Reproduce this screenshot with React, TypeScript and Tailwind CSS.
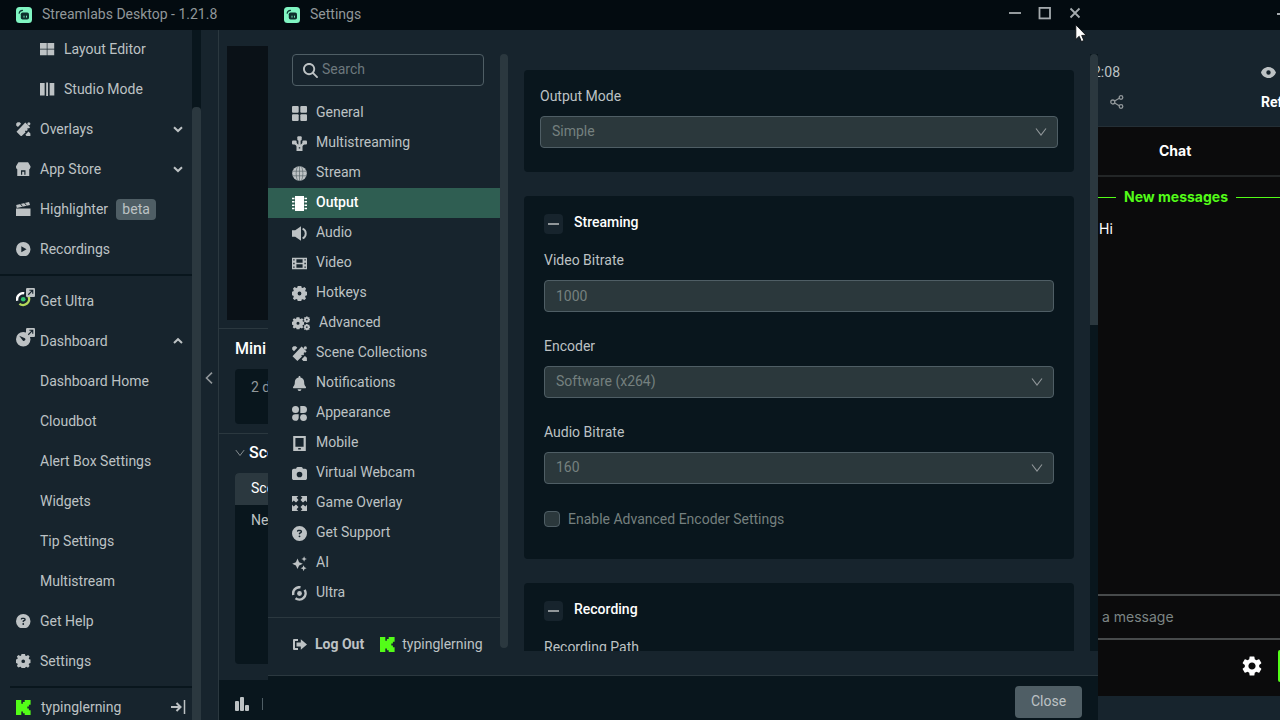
import type { ReactNode } from 'react';
import clsx from 'clsx';
import {
  FaBell,
  FaCamera,
  FaCircleQuestion,
  FaMagnifyingGlass,
} from 'react-icons/fa6';
import { MdSettings } from 'react-icons/md';

type IconName =
  | 'layout'
  | 'studio'
  | 'themes'
  | 'store'
  | 'clapper'
  | 'play'
  | 'ultraColor'
  | 'dashboard'
  | 'general'
  | 'multistream'
  | 'globe'
  | 'output'
  | 'volume'
  | 'gear'
  | 'gears'
  | 'appearance'
  | 'mobile'
  | 'expand'
  | 'sparkles'
  | 'ultra'
  | 'logout'
  | 'kick'
  | 'question'
  | 'film'
  | 'bell'
  | 'camera';

const gearPath =
  'M5.700 0h3.600l.4 1.700 1 .4L12.500 1.100l1.600 1.600-.9 1.700.4 1L15 5.700v3.600l-1.500.4-.4 1 .9 1.700-1.600 1.700-1.700-.9-1 .4L9.300 15H5.700l-.4-1.500-1-.4-1.700.9L.9 12.400l.9-1.700-.4-1L0 9.300V5.700l1.400-.4.4-1L.9 2.700l1.700-1.600 1.700.9 1-.4zM7.500 5.600a1.900 1.900 0 100 3.800 1.900 1.900 0 000-3.800z';

const drawings: Record<string, ReactNode> = {
  layout: <path d="M0 1h7v6H0zM7.700 1h7v6h-7zM0 7.700h7v6H0zM7.700 7.700h7v6h-7z" />,
  studio: <path d="M0 1h4.800v13H0zM6.400 .5h1.900v14H6.400zM10 1h4.800v13H10z" />,
  themes: (
    <>
      <path d="M9.600.6L14.600 5.400l-1.300 1.400-.9-.6-.9 1 .8.9-1.300 1.300-.9-.6-.9.900.8.900L5.400 14.900.5 10.200z" />
      <path d="M1.600.2h2.200l1.500 1.600L2 5.200.2 3.600V1.500zM14.900 14.900h-3.600l-1.600-1.700 3.200-3.300 2 1.900z" />
      <circle cx="13.300" cy="1.900" r="1.600" />
    </>
  ),
  store: (
    <path
      fillRule="evenodd"
      d="M2.500.3h10L15 4.500c.2 1.500-.5 2.700-1.300 3.100V14.700H1.300V7.600C.5 7.200-.2 6 0 4.500zM5.200 8.600v4.500h4.600V8.600zM6.400 10h2.200v3.100H6.400z"
    />
  ),
  clapper: (
    <>
      <path d="M.2 3.100L13.500.1l1 3L.8 6.300zM0 6.700h15v8H0z" />
      <path d="M4.600 2l2 2.500M8.800 1l2 2.500" stroke="#17242d" strokeWidth="1" />
    </>
  ),
  play: <path fillRule="evenodd" d="M7.500 0a7.500 7.500 0 100 15 7.500 7.500 0 000-15zM5.500 4.400l5.400 3.100-5.400 3.100z" />,
  dashboard: (
    <path fillRule="evenodd" d="M7.500 0a7.500 7.500 0 100 15 7.500 7.500 0 000-15zM3.300 3.900l5.900 2.600c1.400 1.100-.1 3.500-2 2.500z" />
  ),
  general: (
    <>
      <rect width="6.700" height="6.700" rx="1" />
      <rect x="8.300" width="6.700" height="6.700" rx="1" />
      <rect y="8.300" width="6.700" height="6.700" rx="1" />
      <rect x="8.300" y="8.300" width="6.700" height="6.700" rx="1" />
    </>
  ),
  multistream: (
    <>
      <path d="M7.500 3v7M2.500 6.500l3 3h4l3-3" fill="none" stroke="currentColor" strokeWidth="2.200" />
      <rect x="5.300" y=".2" width="4.400" height="4.200" rx="1" />
      <rect x="0" y="4.400" width="4.600" height="4" rx="1" />
      <rect x="10.400" y="4.400" width="4.600" height="4" rx="1" />
      <path fillRule="evenodd" d="M4.500 9h6v5.900h-6zM6.800 11.200v1.400h1.400v-1.400z" />
    </>
  ),
  globe: (
    <>
      <circle cx="7.500" cy="7.500" r="7.300" />
      <path
        d="M.4 5.200h14.200M.4 9.800h14.200M7.500 0v15M5.400.5C3.700 5 3.700 10 5.400 14.500M9.600.5c1.700 4.500 1.700 9.500 0 14"
        fill="none"
        stroke="#5c686d"
        strokeWidth=".7"
      />
    </>
  ),
  output: (
    <path d="M3 0h9v15H3zM0 1.800h2.500v1.500H0zM0 5.100h2.500v1.500H0zM0 8.400h2.500v1.500H0zM0 11.700h2.500v1.500H0zM12.500 1.800H15v1.500h-2.500zM12.500 5.100H15v1.500h-2.500zM12.500 8.400H15v1.500h-2.500zM12.500 11.700H15v1.500h-2.500z" />
  ),
  volume: (
    <>
      <path d="M0 4.300h3.200L9 .2v14.600l-5.800-4.100H0z" />
      <path d="M10.600 2.600c4.200 1.600 4.200 8.200 0 9.800" fill="none" stroke="currentColor" strokeWidth="1.900" />
    </>
  ),
  gear: <path fillRule="evenodd" d={gearPath} />,
  film: (
    <path
      fillRule="evenodd"
      d="M0 1.700h15v11.600H0zM1.200 3.200v1.400h1.400V3.200zM1.200 6.800v1.400h1.400V6.800zM1.200 10.400v1.400h1.400v-1.400zM12.400 3.200v1.400h1.400V3.200zM12.400 6.800v1.400h1.400V6.800zM12.400 10.400v1.400h1.400v-1.400zM4.400 3.300v3.500h6.200V3.300zM4.400 8.200v3.500h6.200V8.200z"
    />
  ),
  appearance: (
    <>
      <circle cx="3.500" cy="3.500" r="3.500" />
      <path d="M8.300 0h3.200a3.500 3.500 0 010 7H8.300zM3.500 8.200H6.700v3.500a3.300 3.300 0 11-3.200-3.500z" />
      <circle cx="11.500" cy="11.600" r="3.400" />
    </>
  ),
  mobile: <path fillRule="evenodd" d="M1.200 0h12.600v15H1.200zM3.400 2v8.800h8.200V2zM6.200 12v1.600h2.600V12z" />,
  expand: (
    <path d="M0 0h6.300L4.600 1.700 6.500 4 4 6.500 1.700 4.600 0 6.300zM15 0v6.300l-1.700-1.700L11 6.500 8.500 4l1.900-2.300L8.700 0zM0 15V8.700l1.700 1.700L4 8.500 6.500 11l-1.900 2.300L6.300 15zM15 15H8.700l1.700-1.700L8.500 11 11 8.500l2.300 1.900L15 8.700z" />
  ),
  sparkles: (
    <path d="M5.500 2.600l1.600 3.700 3.700 1.500-3.700 1.600-1.600 3.700-1.600-3.700L.2 7.800l3.700-1.500zM12.100.2l.8 2 2 .8-2 .8-.8 2-.8-2-2-.8 2-.8zM11.600 9.200l.9 2.100 2.100.9-2.100.9-.9 2.100-.9-2.100-2.100-.9 2.100-.9z" />
  ),
  logout: (
    <>
      <path d="M6 2.900H2v9.200h4" fill="none" stroke="currentColor" strokeWidth="2" strokeLinejoin="round" />
      <path d="M4.500 5.400h4.300V2.200L15 7.500l-6.200 5.300V9.600H4.500z" />
    </>
  ),
  kick: (
    <path
      fill="#53fc18"
      d="M0 0h5.300v3.800h1.600V2h1.800V0H14.600v4.800h-1.700v1.600h-1.600v2.200h1.600v1.600h1.700V15H8.700v-1.800H6.900v-1.800H5.300V15H0z"
    />
  ),
};

function UltraRing({ color }: { color?: boolean }) {
  return (
    <>
      <path
        d="M1.300 9A6.300 6.300 0 018.500 1.300"
        fill="none"
        stroke={color ? '#fff' : 'currentColor'}
        strokeWidth="2.500"
      />
      <path
        d="M12.600 3.900A6.300 6.300 0 013.500 12.300"
        fill="none"
        stroke={color ? '#b4d95a' : 'currentColor'}
        strokeWidth="2.500"
      />
      <circle cx="7.500" cy="7.500" r="2.400" fill={color ? '#31c36e' : 'currentColor'} />
    </>
  );
}

function Icon({ name, size = 15 }: { name: IconName; size?: number }) {
  if (name === 'question') return <FaCircleQuestion size={size} />;
  if (name === 'bell') return <FaBell size={size} />;
  if (name === 'camera') return <FaCamera size={size} />;
  if (name === 'gears') {
    return (
      <svg width="18" height="15" viewBox="0 0 18 15" fill="currentColor">
        <path fillRule="evenodd" transform="translate(0 1.300) scale(.8)" d={gearPath} />
        <path fillRule="evenodd" transform="translate(11.700 .5) scale(.42)" d={gearPath} />
        <path fillRule="evenodd" transform="translate(11.700 8) scale(.42)" d={gearPath} />
      </svg>
    );
  }
  return (
    <svg width={size} height={size} viewBox="0 0 15 15" fill="currentColor">
      {name === 'ultra' || name === 'ultraColor' ? <UltraRing color={name === 'ultraColor'} /> : drawings[name]}
    </svg>
  );
}

function AppLogo() {
  return (
    <svg width="16" height="16" viewBox="0 0 16 16">
      <rect width="16" height="16" rx="3.500" fill="#80f5c2" />
      <path d="M3.200 6.200C3.400 4.500 4.600 3.500 6.500 3.400" fill="none" stroke="#0d3a33" strokeWidth="1.200" strokeLinecap="round" />
      <rect x="4.800" y="5.400" width="8.200" height="7.200" rx="1.800" fill="#0d2f2c" />
      <path d="M8 8.700v1.900M10.500 8.700v1.900" stroke="#80f5c2" strokeWidth=".9" />
    </svg>
  );
}

function Chevron({ className, up, thin }: { className?: string; up?: boolean; thin?: boolean }) {
  return (
    <svg width="12" height="8" viewBox="0 0 12 8" className={className} fill="none" stroke="currentColor">
      <path d={up ? 'M2 6l4-3.800L10 6' : thin ? 'M1 .5L6 7l5-6.500' : 'M2 2.200L6 6l4-3.800'} strokeWidth={thin ? 1.1 : 2} />
    </svg>
  );
}

interface NavItem {
  icon?: IconName;
  label: string;
  indent?: boolean;
  beta?: boolean;
  external?: boolean;
  chevron?: 'up' | 'down';
}

const topItems: NavItem[] = [
  { icon: 'layout', label: 'Layout Editor', indent: true },
  { icon: 'studio', label: 'Studio Mode', indent: true },
  { icon: 'themes', label: 'Overlays', chevron: 'down' },
  { icon: 'store', label: 'App Store', chevron: 'down' },
  { icon: 'clapper', label: 'Highlighter', beta: true },
  { icon: 'play', label: 'Recordings' },
];

const bottomItems: NavItem[] = [
  { icon: 'ultraColor', label: 'Get Ultra', external: true },
  { icon: 'dashboard', label: 'Dashboard', external: true, chevron: 'up' },
  { label: 'Dashboard Home' },
  { label: 'Cloudbot' },
  { label: 'Alert Box Settings' },
  { label: 'Widgets' },
  { label: 'Tip Settings' },
  { label: 'Multistream' },
  { icon: 'question', label: 'Get Help' },
  { icon: 'gear', label: 'Settings' },
];

const settingsItems: { icon: IconName; label: string }[] = [
  { icon: 'general', label: 'General' },
  { icon: 'multistream', label: 'Multistreaming' },
  { icon: 'globe', label: 'Stream' },
  { icon: 'output', label: 'Output' },
  { icon: 'volume', label: 'Audio' },
  { icon: 'film', label: 'Video' },
  { icon: 'gear', label: 'Hotkeys' },
  { icon: 'gears', label: 'Advanced' },
  { icon: 'themes', label: 'Scene Collections' },
  { icon: 'bell', label: 'Notifications' },
  { icon: 'appearance', label: 'Appearance' },
  { icon: 'mobile', label: 'Mobile' },
  { icon: 'camera', label: 'Virtual Webcam' },
  { icon: 'expand', label: 'Game Overlay' },
  { icon: 'question', label: 'Get Support' },
  { icon: 'sparkles', label: 'AI' },
  { icon: 'ultra', label: 'Ultra' },
];

function SideNavItem({ item }: { item: NavItem }) {
  return (
    <div className={clsx('flex h-10 items-center pr-2', item.indent ? 'pl-10' : 'pl-4')}>
      <span className={clsx('relative shrink-0', item.external && '-mt-[3px]')}>
        {item.icon ? <Icon name={item.icon} size={14.5} /> : <span className="block w-[14.5px]" />}
        {item.external && (
          <svg width="9" height="9" viewBox="0 0 8 8" className="absolute -top-[4px] left-[9.500px]">
            <rect width="8" height="8" rx="1" fill="#bdc2c4" />
            <path d="M2 6l3.800-3.800M3 2h3v3" fill="none" stroke="#17242d" strokeWidth="1" />
          </svg>
        )}
      </span>
      <span className="ml-[9.5px]">{item.label}</span>
      {item.beta && (
        <span className="ml-2 flex h-[21px] w-10 items-center justify-center rounded bg-[#4f5e65]">beta</span>
      )}
      {item.chevron && <Chevron up={item.chevron === 'up'} className="ml-auto" />}
    </div>
  );
}

function SideNav() {
  return (
    <div className="flex h-full w-[201px] shrink-0">
      <nav className="w-48 shrink-0 overflow-hidden">
        <div className="-mt-px">
          {topItems.map((item) => (
            <SideNavItem key={item.label} item={item} />
          ))}
        </div>
        <div className="mt-[5px] mb-[5px] h-0.5 bg-[#09161d]" />
        {bottomItems.map((item) => (
          <SideNavItem key={item.label} item={item} />
        ))}
        <div className="mt-[5px] ml-2.5 h-0.5 bg-[#09161d]" />
        <div className="flex h-[38px] items-center pr-1.5 pl-4">
          <Icon name="kick" size={15} />
          <span className="ml-2.5">typinglerning</span>
          <svg width="15" height="14" viewBox="0 0 15 14" className="ml-auto" fill="none" stroke="currentColor">
            <path d="M0 7h9M5.500 3l4 4-4 4" strokeWidth="2" />
            <path d="M13.500 0v14" strokeWidth="1.500" />
          </svg>
        </div>
      </nav>
      <div className="w-[9px] bg-[#09161d] pt-[77px]">
        <div className="h-full rounded-t bg-[#2b383f]" />
      </div>
    </div>
  );
}

function EditorPane() {
  return (
    <div className="flex h-full w-[80px] shrink-0 flex-col overflow-hidden border-l border-[#2b383f] whitespace-nowrap">
      <div className="mt-4 ml-2 h-[274px] shrink-0 bg-[#0a1117]" />
      <div className="mt-2 h-[105px] shrink-0 border-t border-[#2b383f] pl-4">
        <div className="flex h-10 items-center text-base font-medium text-white">Mini Feed</div>
        <div className="h-[55px] rounded bg-[#09161d] py-2 pl-4 text-[#91979a]">2 days</div>
      </div>
      <div className="h-[247px] shrink-0 border-t border-[#2b383f] pl-4">
        <div className="flex h-[39px] items-center gap-[4px] pb-0.5 text-base font-medium text-white">
          <Chevron thin className="w-2.5 shrink-0 text-[#91979a]" />
          Scenes
        </div>
        <div className="h-[191px] rounded bg-[#09161d]">
          <div className="flex h-8 items-center rounded-t bg-[#2b383f] pb-0.5 pl-4 text-white">Scene</div>
          <div className="flex h-[30px] items-center pl-4">New</div>
        </div>
      </div>
      <div className="flex h-10 shrink-0 items-center bg-[#09161d] pt-2 pl-4">
        <svg width="14" height="14" viewBox="0 0 14 14" fill="currentColor">
          <rect y="4" width="4" height="10" rx="1" />
          <rect x="5" width="4" height="14" rx="1" />
          <rect x="10" y="8" width="4" height="6" rx="1" />
        </svg>
        <div className="ml-[13px] h-3 w-px bg-[#4f5e65]" />
      </div>
    </div>
  );
}

function ChatPane() {
  return (
    <div className="ml-auto flex h-full w-[184px] shrink-0 flex-col overflow-hidden whitespace-nowrap">
      <div className="flex h-[97px] shrink-0 flex-col border-b border-[#242f36] pt-[27px]">
        <div className="flex h-[30px] items-center justify-between pr-1">
          <span className="-ml-[3px]">2:08</span>
          <svg width="15" height="11" viewBox="0 0 15 11" fill="currentColor">
            <path
              fillRule="evenodd"
              d="M7.500 0C11 0 13.800 2.300 15 5.500 13.800 8.700 11 11 7.500 11S1.200 8.700 0 5.500C1.200 2.300 4 0 7.500 0zM7.500 3.300a2.200 2.200 0 100 4.400 2.200 2.200 0 000-4.400z"
            />
          </svg>
        </div>
        <div className="flex h-[30px] items-center">
          <svg
            width="14"
            height="14"
            viewBox="0 0 14 14"
            className="ml-[14px] mr-px shrink-0 text-[#91979a]"
            fill="none"
            stroke="currentColor"
            strokeWidth="1.300"
          >
            <circle cx="2.800" cy="7" r="2" />
            <circle cx="11" cy="2.500" r="1.800" />
            <circle cx="11" cy="11.500" r="1.800" />
            <path d="M4.600 6l4.700-2.700M4.600 8l4.700 2.700" />
          </svg>
          <span className="ml-[136px] shrink-0 font-bold text-white">Refresh</span>
        </div>
      </div>
      <div className="ml-0.5 flex h-[569px] shrink-0 flex-col bg-[#0b0b0c] font-[Inter,sans-serif] text-white">
        <div className="flex h-[50px] items-center border-b-2 border-[#232627] pl-[61px] font-bold">Chat</div>
        <div className="mt-2.5 flex h-5 items-center text-[#53fc18]">
          <div className="h-px w-[18px] bg-current" />
          <span className="mx-2 font-bold">New messages</span>
          <div className="h-px flex-1 bg-current" />
        </div>
        <div className="mt-3 pl-px">Hi</div>
        <div className="mt-auto flex h-[46px] items-center border-y-2 border-[#474a4b] pl-1 text-[#7c8584]">a message</div>
        <div className="flex h-14 items-center justify-end pb-1">
          <MdSettings size={24} />
          <div className="ml-3.5 h-8 w-0.5 rounded-l-sm bg-[#53fc18]" />
        </div>
      </div>
    </div>
  );
}

function Field({ label, value, select }: { label: string; value: string; select?: boolean }) {
  return (
    <div>
      <div className="h-5 leading-5">{label}</div>
      <div className="mt-2.5 flex h-8 items-center justify-between rounded border border-[#4f5e65] bg-[#2b383c] pr-2.5 pl-[11px] text-[#75807f]">
        <span className={clsx(select && '-mt-0.5')}>{value}</span>
        {select && <Chevron thin className="text-[#91979a]" />}
      </div>
    </div>
  );
}

function SectionHeader({ title }: { title: string }) {
  return (
    <div className="flex h-5 items-center">
      <div className="mt-0.5 flex h-5 w-[19px] items-center justify-center rounded bg-[#17242d]">
        <div className="h-0.5 w-[11px] bg-[#91979a]" />
      </div>
      <span className="-mt-0.5 ml-[11px] font-medium text-white">{title}</span>
    </div>
  );
}

function SettingsNav() {
  return (
    <div className="w-[232px] shrink-0">
      <div className="mt-6 mr-4 ml-6 flex h-8 items-center rounded border border-[#4f5e65] pl-2.5">
        <FaMagnifyingGlass size={15} />
        <span className="-mt-0.5 ml-1 text-[#6d787d]">Search</span>
      </div>
      <div className="mt-3">
        {settingsItems.map((item) => (
          <div
            key={item.label}
            className={clsx(
              'flex h-[30px] items-center gap-[9px] pl-6',
              item.label === 'Output' && 'bg-[#2f5e52] font-medium text-white',
            )}
          >
            <Icon name={item.icon} />
            <span className="-mt-0.5">{item.label}</span>
          </div>
        ))}
      </div>
      <div className="mt-[9px] flex h-[54px] items-center border-t border-[#2b383f] pl-6">
        <Icon name="logout" />
        <span className="-mt-0.5 ml-2 font-bold">Log Out</span>
        <span className="ml-4 flex items-center gap-2">
          <Icon name="kick" size={15} />
          <span className="-mt-0.5 -ml-px">typinglerning</span>
        </span>
      </div>
    </div>
  );
}

function SettingsWindow() {
  return (
    <div className="absolute inset-y-0 left-[268px] flex w-[830px] flex-col bg-[#17242d]">
      <div className="flex h-[30px] shrink-0 items-center bg-[#030b10] pl-4 text-[#91979a]">
        <AppLogo />
        <span className="-mt-0.5 ml-2.5">Settings</span>
        <svg width="74" height="14" viewBox="0 0 74 14" className="mr-4 -mt-1 ml-auto" fill="none" stroke="#a5abae" strokeWidth="1.800">
          <path d="M1 7h12" />
          <rect x="31.500" y="1.900" width="10.500" height="10.500" />
          <path d="M62.500 2.500l9 9M71.500 2.500l-9 9" />
        </svg>
      </div>
      <div className="flex h-[645px] shrink-0">
        <SettingsNav />
        <div className="mt-6 h-[594px] w-2 rounded bg-[#2b383f]" />
        <div className="mt-6 h-[597px] w-[566px] shrink-0 overflow-hidden pt-4 pl-4">
          <div className="h-[102px] rounded bg-[#09161d] px-4 pt-4">
            <Field label="Output Mode" value="Simple" select />
          </div>
          <div className="mt-6 flex h-[363px] flex-col gap-6 rounded bg-[#09161d] px-5 pt-[17px]">
            <div className="-mb-[7px]">
              <SectionHeader title="Streaming" />
            </div>
            <Field label="Video Bitrate" value="1000" />
            <Field label="Encoder" value="Software (x264)" select />
            <Field label="Audio Bitrate" value="160" select />
            <div className="mt-[3px] flex h-4 items-center gap-2 text-[#75807f]">
              <div className="size-4 rounded border border-[#4f5e65] bg-[#2b383c]" />
              Enable Advanced Encoder Settings
            </div>
          </div>
          <div className="mt-6 rounded bg-[#09161d] px-5 pt-[17px] pb-10">
            <SectionHeader title="Recording" />
            <div className="mt-[17px] h-5 leading-5">Recording Path</div>
          </div>
        </div>
        <div className="mt-6 ml-4 h-[597px] w-2 bg-[#09161d]">
          <div className="h-[271px] rounded-t bg-[#2b383f]" />
        </div>
      </div>
      <div className="flex flex-1 justify-end border-t border-[#2b383f] bg-[#09161d] pt-2.5 pr-4">
        <button className="h-8 w-[67px] rounded bg-[#4f5e65] pb-0.5 text-sm">Close</button>
      </div>
    </div>
  );
}

export default function App() {
  return (
    <div className="relative flex h-[720px] w-[1280px] flex-col overflow-hidden bg-[#17242d] font-[Roboto,sans-serif] text-sm text-[#bdc2c4]">
      <header className="flex h-[30px] shrink-0 items-center bg-[#030b10] pl-4 text-[#91979a]">
        <AppLogo />
        <span className="-mt-0.5 ml-2.5">Streamlabs Desktop - 1.21.8</span>
        <div className="mt-[-3px] ml-auto h-0.5 w-[3px] bg-[#a5abae]" />
      </header>
      <div className="flex h-[690px]">
        <SideNav />
        <div className="flex w-[17px] shrink-0 items-center justify-center pr-0.5">
          <svg width="8" height="12" viewBox="0 0 8 12" className="mt-[5px]" fill="none" stroke="#91979a" strokeWidth="1.600">
            <path d="M7 .6L1.500 6 7 11.400" />
          </svg>
        </div>
        <EditorPane />
        <ChatPane />
      </div>
      <SettingsWindow />
      {/* Mouse pointer */}
      <svg width="12" height="19" viewBox="0 0 12 19" className="absolute top-[24px] left-[1075px]">
        <path
          d="M.8.800v14.700l3.400-3.200 2.200 5.300 2.500-1.100-2.200-5.100h4.500z"
          fill="#fff"
          stroke="#0a0f12"
          strokeWidth=".9"
        />
      </svg>
    </div>
  );
}
